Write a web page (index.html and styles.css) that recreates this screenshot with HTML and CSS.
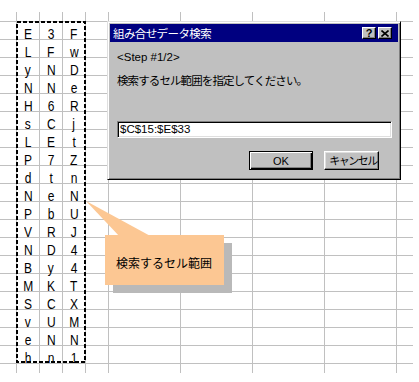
FILE: index.html
```html
<html lang="ja"><head>
    <meta charset="UTF-8">
    <meta name="viewport" content="width=device-width, initial-scale=1.0">
    <title>組み合せデータ検索</title>
    <link rel="stylesheet" href="styles.css">
</head>

<body>
    <div class="sheet">
        <div class="row head"><div></div><div></div><div></div><div></div><div></div><div></div><div></div><div></div><div></div><div></div></div>
        <div class="row"><div></div><div><span>E</span></div><div><span>3</span></div><div><span>F</span></div><div></div><div></div><div></div><div></div><div></div><div></div></div>
        <div class="row"><div></div><div><span>L</span></div><div><span>F</span></div><div><span>w</span></div><div></div><div></div><div></div><div></div><div></div><div></div></div>
        <div class="row"><div></div><div><span>y</span></div><div><span>N</span></div><div><span>D</span></div><div></div><div></div><div></div><div></div><div></div><div></div></div>
        <div class="row"><div></div><div><span>N</span></div><div><span>N</span></div><div><span>e</span></div><div></div><div></div><div></div><div></div><div></div><div></div></div>
        <div class="row"><div></div><div><span>H</span></div><div><span>6</span></div><div><span>R</span></div><div></div><div></div><div></div><div></div><div></div><div></div></div>
        <div class="row"><div></div><div><span>s</span></div><div><span>C</span></div><div><span>j</span></div><div></div><div></div><div></div><div></div><div></div><div></div></div>
        <div class="row"><div></div><div><span>L</span></div><div><span>E</span></div><div><span>t</span></div><div></div><div></div><div></div><div></div><div></div><div></div></div>
        <div class="row"><div></div><div><span>P</span></div><div><span>7</span></div><div><span>Z</span></div><div></div><div></div><div></div><div></div><div></div><div></div></div>
        <div class="row"><div></div><div><span>d</span></div><div><span>t</span></div><div><span>n</span></div><div></div><div></div><div></div><div></div><div></div><div></div></div>
        <div class="row"><div></div><div><span>N</span></div><div><span>e</span></div><div><span>N</span></div><div></div><div></div><div></div><div></div><div></div><div></div></div>
        <div class="row"><div></div><div><span>P</span></div><div><span>b</span></div><div><span>U</span></div><div></div><div></div><div></div><div></div><div></div><div></div></div>
        <div class="row"><div></div><div><span>V</span></div><div><span>R</span></div><div><span>J</span></div><div></div><div></div><div></div><div></div><div></div><div></div></div>
        <div class="row"><div></div><div><span>N</span></div><div><span>D</span></div><div><span>4</span></div><div></div><div></div><div></div><div></div><div></div><div></div></div>
        <div class="row"><div></div><div><span>B</span></div><div><span>y</span></div><div><span>4</span></div><div></div><div></div><div></div><div></div><div></div><div></div></div>
        <div class="row"><div></div><div><span>M</span></div><div><span>K</span></div><div><span>T</span></div><div></div><div></div><div></div><div></div><div></div><div></div></div>
        <div class="row"><div></div><div><span>S</span></div><div><span>C</span></div><div><span>X</span></div><div></div><div></div><div></div><div></div><div></div><div></div></div>
        <div class="row"><div></div><div><span>v</span></div><div><span>U</span></div><div><span>M</span></div><div></div><div></div><div></div><div></div><div></div><div></div></div>
        <div class="row"><div></div><div><span>e</span></div><div><span>N</span></div><div><span>N</span></div><div></div><div></div><div></div><div></div><div></div><div></div></div>
        <div class="row"><div></div><div><span>h</span></div><div><span>n</span></div><div><span>1</span></div><div></div><div></div><div></div><div></div><div></div><div></div></div>
        <div class="row foot"><div></div><div></div><div></div><div></div><div></div><div></div><div></div><div></div><div></div><div></div></div>

        <!-- 選択範囲の点線 -->
        <svg class="marquee" width="70" height="342" viewBox="0 0 70 342">
            <rect x="1" y="1" width="68" height="340" fill="none" stroke="#000" stroke-width="2" stroke-dasharray="4 2"/>
        </svg>

        <div class="dialog">
            <div class="titlebar">
                <span class="title">組み合せデータ検索</span>
                <span class="tbtn help">?</span>
                <span class="tbtn close">
                    <svg width="8" height="7" viewBox="0 0 8 7"><path d="M0.5 0.5 L7.5 6.5 M7.5 0.5 L0.5 6.5" stroke="#000" stroke-width="1.6"/></svg>
                </span>
            </div>
            <div class="dialog-body">
                <div class="step">&lt;Step #1/2&gt;</div>
                <div class="message">検索するセル範囲を指定してください。</div>
                <div class="field">$C$15:$E$33</div>
                <div class="buttons">
                    <div class="btn default">OK</div>
                    <div class="btn cancel">キャンセル</div>
                </div>
            </div>
        </div>

        <svg class="pointer" width="70" height="37" viewBox="0 0 70 37">
            <polygon points="0,0 35,37 68,37" fill="#fcc793"/>
        </svg>
        <div class="callout">検索するセル範囲</div>
    </div>
</body></html>
```

FILE: styles.css
```css
* {
    margin: 0;
    padding: 0;
    box-sizing: border-box;
}

body {
    background: #fff;
    font-family: "Liberation Sans", "Noto Sans CJK JP", sans-serif;
    width: 419px;
    height: 382px;
    overflow: hidden;
}

.sheet {
    position: relative;
    padding-top: 12px;
}

.row {
    display: grid;
    grid-template-columns: 17px 23px 23px 23px 23px 72px 72px 72px 72px 16px;
    grid-template-rows: 18px;
}

.row > div {
    border-right: 1px solid #c0c0c0;
    border-bottom: 1px solid #c0c0c0;
    text-align: center;
    font-size: 15px;
    line-height: 23px;
    color: #000;
}

.row > div span {
    display: inline-block;
    transform: scaleX(0.8);
}

.row > div:last-child {
    border-right: 0;
}

.row.head {
    grid-template-rows: 10px;
}

.row.foot {
    grid-template-rows: 9px;
}

.row.foot > div {
    border-bottom: 0;
}

.marquee {
    position: absolute;
    left: 16px;
    top: 21px;
}

/* ダイアログ */
.dialog {
    position: absolute;
    left: 107px;
    top: 21px;
    width: 294px;
    height: 159px;
    padding: 2px;
    background: #c0c0c0;
    border: 1px solid;
    border-color: #dfdfdf #000 #000 #dfdfdf;
    box-shadow: inset 1px 1px #fff, inset -1px -1px #808080;
    color: #000;
    font-size: 11px;
}

.titlebar {
    height: 18px;
    display: flex;
    align-items: center;
    gap: 2px;
    padding: 0 6px 0 3px;
    background: #000080;
    color: #fff;
}

.title {
    flex: 1;
    font-size: 11.5px;
    letter-spacing: -0.6px;
}

.tbtn {
    width: 14px;
    height: 12px;
    display: flex;
    align-items: center;
    justify-content: center;
    background: #c0c0c0;
    border: 1px solid;
    border-color: #fff #000 #000 #fff;
    box-shadow: inset -1px -1px #808080;
    color: #000;
    font-size: 11px;
    font-weight: bold;
    line-height: 10px;
}

.dialog-body {
    padding: 8px 6px 0 7px;
}

.step {
    line-height: 14px;
    font-size: 11.5px;
}

.message {
    margin-top: 10px;
    line-height: 14px;
    font-size: 11.5px;
    letter-spacing: -0.9px;
}

.field {
    margin-top: 33px;
    height: 17px;
    padding-left: 2px;
    background: #fff;
    border: 1px solid;
    border-color: #808080 #fff #fff #808080;
    box-shadow: inset 1px 1px #000, inset -1px -1px #dfdfdf;
    font-size: 11.5px;
    line-height: 15px;
}

.buttons {
    margin-top: 13px;
    display: flex;
    justify-content: flex-end;
    gap: 11px;
    padding-right: 13px;
}

.btn {
    height: 19px;
    display: flex;
    align-items: center;
    justify-content: center;
    border: 1px solid;
    border-color: #fff #000 #000 #fff;
    box-shadow: inset -1px -1px #808080, inset 1px 1px #dfdfdf;
    line-height: 14px;
}

.btn.default {
    width: 64px;
    border-color: #000;
    box-shadow: inset 1px 1px #fff, inset -1px -1px #000, inset -2px -2px #808080;
}

.btn.cancel {
    width: 55px;
    letter-spacing: -1.5px;
    padding-left: 3px;
}

/* 吹き出し */
.pointer {
    position: absolute;
    left: 86px;
    top: 201px;
}

.callout {
    position: absolute;
    left: 105px;
    top: 235px;
    width: 119px;
    height: 50px;
    padding: 5px 0 0 11px;
    display: flex;
    align-items: center;
    background: #fcc793;
    box-shadow: 8px 8px 0 #b9b9b9;
    font-family: "Noto Sans CJK JP", sans-serif;
    font-size: 12px;
    color: #000;
}
```
